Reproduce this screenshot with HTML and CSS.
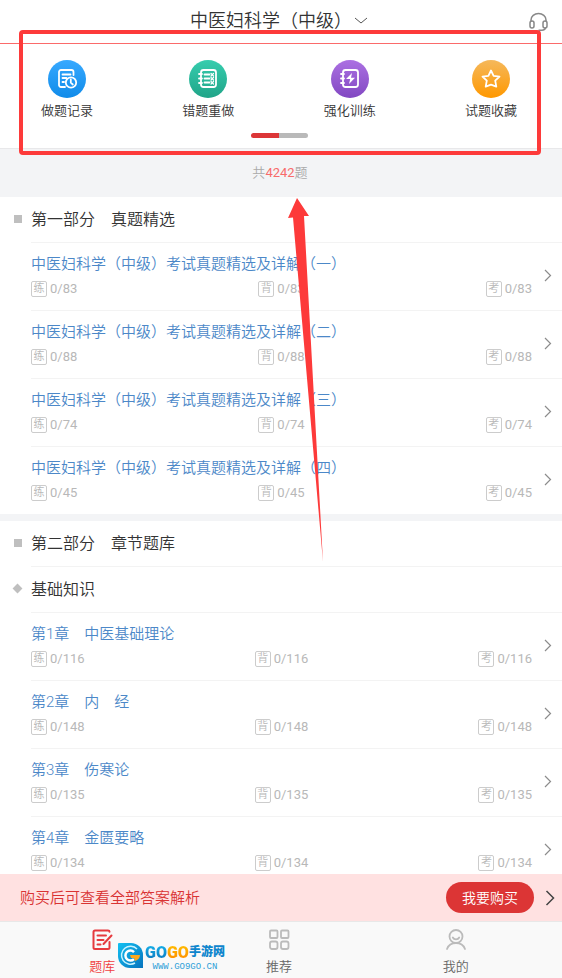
FILE: index.html
```html
<!DOCTYPE html>
<html lang="zh-CN">
<head>
    <meta charset="UTF-8">
    <title>中医妇科学（中级）</title>
    <meta name="viewport" content="width=device-width, initial-scale=1.0">
    <link rel="stylesheet" href="styles.css">
</head>
<body>
    <header class="topbar">
        <button type="button" class="subject">
            中医妇科学（中级）
            <svg width="14" height="8" viewBox="0 0 14 8"><path d="M1 1l6 5 6-5"/></svg>
        </button>
        <button type="button" class="service" aria-label="客服">
            <svg width="20" height="20" viewBox="0 0 20 20">
                <path d="M3 9V8a7.500 6.500 0 0 1 15 0v1"/>
                <rect x="2" y="9" width="4" height="7" rx="2"/>
                <rect x="15" y="9" width="4" height="7" rx="2"/>
                <path d="M17.500 16c-.5 1.600-2 2.200-3.500 2.200H11"/>
            </svg>
        </button>
    </header>

    <main>
        <section class="tools">
            <nav class="tool-list">
                <a href="#record">
                    <span class="circle blue">
                        <svg width="22" height="22" viewBox="0 0 22 22">
                            <path d="M9 19H5a2 2 0 0 1-2-2V4a2 2 0 0 1 2-2h10.500a2 2 0 0 1 2 2v3M6.500 6.500h8M6.500 10h4M6.500 14h1.500"/>
                            <circle cx="15" cy="14.500" r="5.200"/>
                            <path d="M14.800 11.500v3.200l2 1.800"/>
                        </svg>
                    </span>
                    做题记录
                </a>
                <a href="#wrong">
                    <span class="circle green">
                        <svg width="22" height="22" viewBox="0 0 22 22">
                            <rect x="4" y="2" width="15" height="17" rx="2.500"/>
                            <path d="M2 6h3M2 10.500h3M2 15h3M7.500 6.500h5M7.500 10.500h5M7.500 14.500h5"/>
                            <path class="thin" d="M14 5.500l2.500 2.500m0-2.500L14 8M14 9.500l2.500 2.500m0-2.500L14 12M14 13.500l2.500 2.500m0-2.500L14 16"/>
                        </svg>
                    </span>
                    错题重做
                </a>
                <a href="#training">
                    <span class="circle purple">
                        <svg width="22" height="22" viewBox="0 0 22 22">
                            <rect x="4" y="2" width="15" height="17" rx="2.500"/>
                            <path d="M2 6h3M2 10.500h3M2 15h3"/>
                            <path class="solid" d="M13 5l-6 6h4.200L10 16l6-6.300h-4z"/>
                        </svg>
                    </span>
                    强化训练
                </a>
                <a href="#favorite">
                    <span class="circle orange">
                        <svg width="22" height="22" viewBox="0 0 22 22">
                            <path d="M11 2.500l2.600 5.300 5.900.8-4.300 4.100 1.100 5.900-5.300-1.900-5.300 1.900 1.100-5.900-4.300-4.100 5.900-.8z"/>
                        </svg>
                    </span>
                    试题收藏
                </a>
            </nav>
            <div class="pager"></div>
        </section>

        <p class="total">共<b>4242</b>题</p>

        <section class="part">
            <h2 class="square">第一部分　真题精选</h2>
            <ul>
                <li><a href="#p1"><div class="info"><h3>中医妇科学（中级）考试真题精选及详解（一）</h3>
                    <div class="counts"><span><i>练</i>0/83</span><span><i>背</i>0/83</span><span><i>考</i>0/83</span></div></div>
                    <svg class="arrow" width="9" height="14" viewBox="0 0 9 14"><path d="M2 1l5.500 5.500L2 12"/></svg></a></li>
                <li><a href="#p2"><div class="info"><h3>中医妇科学（中级）考试真题精选及详解（二）</h3>
                    <div class="counts"><span><i>练</i>0/88</span><span><i>背</i>0/88</span><span><i>考</i>0/88</span></div></div>
                    <svg class="arrow" width="9" height="14" viewBox="0 0 9 14"><path d="M2 1l5.500 5.500L2 12"/></svg></a></li>
                <li><a href="#p3"><div class="info"><h3>中医妇科学（中级）考试真题精选及详解（三）</h3>
                    <div class="counts"><span><i>练</i>0/74</span><span><i>背</i>0/74</span><span><i>考</i>0/74</span></div></div>
                    <svg class="arrow" width="9" height="14" viewBox="0 0 9 14"><path d="M2 1l5.500 5.500L2 12"/></svg></a></li>
                <li><a href="#p4"><div class="info"><h3>中医妇科学（中级）考试真题精选及详解（四）</h3>
                    <div class="counts"><span><i>练</i>0/45</span><span><i>背</i>0/45</span><span><i>考</i>0/45</span></div></div>
                    <svg class="arrow" width="9" height="14" viewBox="0 0 9 14"><path d="M2 1l5.500 5.500L2 12"/></svg></a></li>
            </ul>
        </section>

        <section class="part">
            <h2 class="square">第二部分　章节题库</h2>
            <h2 class="diamond">基础知识</h2>
            <ul>
                <li><a href="#c1"><div class="info"><h3>第1章　中医基础理论</h3>
                    <div class="counts"><span><i>练</i>0/116</span><span><i>背</i>0/116</span><span><i>考</i>0/116</span></div></div>
                    <svg class="arrow" width="9" height="14" viewBox="0 0 9 14"><path d="M2 1l5.500 5.500L2 12"/></svg></a></li>
                <li><a href="#c2"><div class="info"><h3>第2章　内　经</h3>
                    <div class="counts"><span><i>练</i>0/148</span><span><i>背</i>0/148</span><span><i>考</i>0/148</span></div></div>
                    <svg class="arrow" width="9" height="14" viewBox="0 0 9 14"><path d="M2 1l5.500 5.500L2 12"/></svg></a></li>
                <li><a href="#c3"><div class="info"><h3>第3章　伤寒论</h3>
                    <div class="counts"><span><i>练</i>0/135</span><span><i>背</i>0/135</span><span><i>考</i>0/135</span></div></div>
                    <svg class="arrow" width="9" height="14" viewBox="0 0 9 14"><path d="M2 1l5.500 5.500L2 12"/></svg></a></li>
                <li><a href="#c4"><div class="info"><h3>第4章　金匮要略</h3>
                    <div class="counts"><span><i>练</i>0/134</span><span><i>背</i>0/134</span><span><i>考</i>0/134</span></div></div>
                    <svg class="arrow" width="9" height="14" viewBox="0 0 9 14"><path d="M2 1l5.500 5.500L2 12"/></svg></a></li>
            </ul>
        </section>
    </main>

    <div class="buy">
        <p>购买后可查看全部答案解析</p>
        <button type="button">我要购买</button>
        <svg width="10" height="18" viewBox="0 0 10 18"><path d="M1.500 2l7 7-7 7"/></svg>
    </div>

    <nav class="tabs">
        <a href="#bank" class="active">
            <svg width="24" height="24" viewBox="0 0 24 24">
                <path d="M19.500 3.800C19.500 3 19 2.500 18 2.500H5A1.500 1.500 0 0 0 3.500 4v15.500A1.500 1.500 0 0 0 5 21h13a1.500 1.500 0 0 0 1.500-1.500V14"/>
                <path d="M7.500 7.500H16M7.500 12h6M7.500 16.500h3"/>
                <path d="M21.500 7.500L13.500 16"/>
            </svg>
            题库
        </a>
        <a href="#recommend">
            <svg width="24" height="24" viewBox="0 0 24 24">
                <rect x="3" y="2.500" width="7.500" height="7.500" rx="1"/>
                <rect x="14" y="2.500" width="7.500" height="7.500" rx="1"/>
                <rect x="3" y="13.500" width="7.500" height="7.500" rx="2"/>
                <rect x="14" y="13.500" width="7.500" height="7.500" rx="2"/>
            </svg>
            推荐
        </a>
        <a href="#mine">
            <svg width="24" height="24" viewBox="0 0 24 24">
                <circle cx="12" cy="8.500" r="6.500"/>
                <path d="M8.800 9.500c1.200 2.600 5.200 2.600 6.400 0M3 21c1.500-4 5-6 9-6s7.500 2 9 6"/>
            </svg>
            我的
        </a>
        <div class="watermark">
            <svg width="25" height="25" viewBox="0 0 25 25">
                <defs>
                    <linearGradient id="leaf" x1="0" y1="0" x2="1" y2="1">
                        <stop offset="0" stop-color="#12c0f2"/>
                        <stop offset="1" stop-color="#0873bd"/>
                    </linearGradient>
                </defs>
                <path fill="url(#leaf)" d="M1 0h12a12 12 0 0 1 12 12v13H12A12 12 0 0 1 0 13V1q0-1 1-1z"/>
                <path fill="none" stroke="#c9f3ff" stroke-width="1.500" d="M19 6A9 9 0 1 0 17 20"/>
                <path fill="none" stroke="#fff" stroke-width="2.500" d="M16 9a5 5 0 1 0 0 7"/>
                <path fill="#ffa81c" d="M12 12h10c0 3-2 5-5 6l-1-3h-3z"/>
            </svg>
            <div class="brand">
                <div class="name"><b class="cyan">GO</b><b class="gold">GO</b><strong>手游网</strong></div>
                <small>WWW.GO9GO.CN</small>
            </div>
        </div>
    </nav>

    <div class="mark-box"></div>
    <svg class="mark-arrow" width="38" height="364" viewBox="0 0 38 364"><path d="M11 0L23 18 18 18 37 364 7 19.500 2 20z"/></svg>
</body>
</html>
```
FILE: styles.css
```css
* { box-sizing: border-box; margin: 0; padding: 0; }
body {
    position: relative;
    display: flex;
    flex-direction: column;
    height: 100vh;
    overflow: hidden;
    font-family: Roboto, "Noto Sans CJK SC", sans-serif;
    font-weight: 350;
    font-size: 13px;
    line-height: 20px;
    color: #333;
    background: #fff;
}
a { color: inherit; text-decoration: none; }
button { border: none; background: none; font: inherit; color: inherit; cursor: pointer; }
ul { list-style: none; }
svg { display: block; flex: none; }

.topbar {
    display: grid;
    grid-template-columns: 40px 1fr 40px;
    align-items: center;
    height: 44px;
    padding-right: 4px;
    border-bottom: 1px solid #fb6a6a;
    flex: none;
}
.subject {
    grid-column: 2;
    display: flex;
    justify-content: center;
    align-items: center;
    gap: 2px;
    font-size: 18px;
    line-height: 24px;
    padding-bottom: 2px;
}
.subject svg { fill: none; stroke: #555; }
.service { display: flex; justify-content: center; }
.service svg { fill: none; stroke: #888; stroke-width: 1.500; stroke-linecap: round; }

main {
    flex: 1;
    min-height: 0;
    overflow-y: auto;
    scrollbar-width: none;
}

.tools {
    padding: 16px 45px 10px 41px;
    border-bottom: 1px solid #e8e8ea;
}
.tool-list { display: flex; justify-content: space-between; }
.tool-list a {
    display: flex;
    flex-direction: column;
    align-items: center;
    gap: 3px;
}
.circle {
    display: flex;
    align-items: center;
    justify-content: center;
    width: 38px;
    height: 38px;
    border-radius: 50%;
}
.circle svg {
    fill: none;
    stroke: #fff;
    stroke-width: 1.800;
    stroke-linecap: round;
    stroke-linejoin: round;
}
.circle .thin { stroke-width: 1.200; }
.circle .solid { fill: #fff; stroke: none; }
.blue { background: linear-gradient(#37a9ff, #108be9); }
.green { background: linear-gradient(#36cdae, #20a488); }
.purple { background: linear-gradient(#ab70e2, #8248c2); }
.orange { background: linear-gradient(#f5b85b, #ff9800); }
.pager {
    width: 57px;
    height: 5px;
    margin: 12px auto 0;
    border-radius: 3px;
    background: linear-gradient(to right, #dc3638 50%, #b9b9b9 50%);
}

.total {
    padding: 14px 2px 14px 0;
    text-align: center;
    color: #aaa;
    background: #f3f4f6;
}
.total b { font-weight: 400; color: #f86b6b; }

.part + .part { border-top: 7px solid #f3f4f6; }
.part h2 {
    position: relative;
    margin-left: 31px;
    padding: 11px 0 10px;
    font-size: 16px;
    font-weight: inherit;
    line-height: 24px;
    border-bottom: 1px solid #f3f3f3;
}
.part h2::before {
    content: '';
    position: absolute;
    left: -17px;
    top: 18px;
    width: 8px;
    height: 8px;
    background: #bfbfbf;
}
.part .diamond::before {
    width: 7px;
    height: 7px;
    transform: rotate(45deg);
}
.part li {
    margin-left: 31px;
    border-bottom: 1px solid #f3f3f3;
}
.part li:last-child { border-bottom: none; }
.part li a {
    display: flex;
    align-items: center;
    gap: 11px;
    padding: 11px 10px 13px 0;
}
.info { flex: 1; }
.info h3 {
    margin-bottom: 7px;
    font-size: 15px;
    font-weight: inherit;
    line-height: 20px;
    color: #4c88c8;
}
.counts {
    display: flex;
    justify-content: space-between;
    font-weight: 400;
    line-height: 16px;
    color: #b8b8b8;
}
.counts span { display: flex; gap: 3px; }
.counts i {
    display: flex;
    justify-content: center;
    width: 16px;
    height: 16px;
    border: 1px solid #ccc;
    border-radius: 2px;
    font-size: 11px;
    font-style: normal;
    font-weight: 350;
    line-height: 14px;
}
.arrow { fill: none; stroke: #8c8c8c; stroke-width: 1.200; }

.buy {
    display: flex;
    align-items: center;
    height: 47px;
    padding: 0 7px 0 20px;
    font-size: 15px;
    color: #d93333;
    background: #ffe1e1;
    flex: none;
}
.buy p { flex: 1; }
.buy button {
    width: 88px;
    height: 31px;
    margin-right: 11px;
    border-radius: 16px;
    font-size: 14px;
    color: #fff;
    background: #dc3535;
}
.buy svg { fill: none; stroke: #444; stroke-width: 1.500; }

.tabs {
    position: relative;
    display: flex;
    height: 57px;
    padding: 6px 18px 0 14px;
    border-top: 1px solid #e8e8e8;
    background: #f9f9f9;
    color: #666;
    flex: none;
}
.tabs a {
    flex: 1;
    display: flex;
    flex-direction: column;
    align-items: center;
    gap: 5px;
}
.tabs a svg {
    fill: none;
    stroke: #bbb;
    stroke-width: 1.800;
    stroke-linecap: round;
}
.tabs .active { color: #f04040; }
.tabs .active svg { stroke: #e63a3e; stroke-width: 2; }

.watermark {
    position: absolute;
    left: 118px;
    top: 21px;
    display: flex;
    gap: 2px;
}
.brand .name {
    display: flex;
    align-items: center;
    height: 19px;
    line-height: 19px;
}
.brand b { font-size: 16px; font-weight: 900; color: transparent; background-clip: text; }
.brand .cyan { background-image: linear-gradient(#19b9ef, #0b6fb8); }
.brand .gold { background-image: linear-gradient(#ffc400, #ff8500); }
.brand strong { font-size: 12px; font-weight: 900; color: #0f86cd; }
.brand small {
    display: block;
    margin-top: 1px;
    font: 9px/8px "Liberation Mono", monospace;
    text-align: center;
    color: #2d9fd8;
}

/* red annotation over the page */
.mark-box {
    position: absolute;
    left: 19px;
    right: 21px;
    top: 30px;
    height: 125px;
    border: 4px solid #fd3a3a;
    border-radius: 4px;
    pointer-events: none;
}
.mark-arrow {
    position: absolute;
    left: 286px;
    top: 198px;
    fill: #fd3a3a;
    pointer-events: none;
}
```
